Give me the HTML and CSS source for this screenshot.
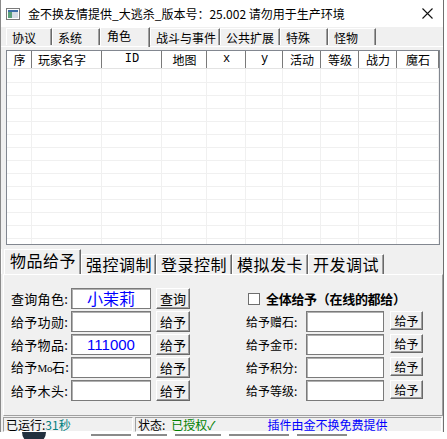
FILE: index.html
```html
<!DOCTYPE html>
<html lang="zh-CN">
<head>
    <meta charset="UTF-8">
    <title>金不换友情提供_大逃杀</title>
    <link rel="stylesheet" href="styles.css">
</head>
<body>
    <div class="screen">
        <div class="window">
            <div class="titlebar">
                <svg class="app-icon" width="14" height="12" viewBox="0 0 14 12">
                    <rect x="0.5" y="0.5" width="13" height="11" fill="#fff" stroke="#7a7a7a"/>
                    <rect x="2" y="2" width="10" height="2" fill="#3d6fa8"/>
                    <rect x="2" y="4" width="4" height="6" fill="#5aa07a"/>
                    <rect x="6" y="4" width="6" height="6" fill="#d6dde6"/>
                </svg>
                <span class="title">金不换友情提供_大逃杀_版本号：25.002 请勿用于生产环境</span>
                <svg class="close" width="11" height="11" viewBox="0 0 11 11">
                    <path d="M0.5 0.5 L10.5 10.5 M10.5 0.5 L0.5 10.5" stroke="#111" stroke-width="1.1"/>
                </svg>
            </div>

            <div class="tabs">
                <div class="tab w46">协议</div>
                <div class="tab w48">系统</div>
                <div class="tab w50 active">角色</div>
                <div class="tab w70">战斗与事件</div>
                <div class="tab w60">公共扩展</div>
                <div class="tab w48">特殊</div>
                <div class="tab w48">怪物</div>
            </div>

            <div class="page">
                <div class="listview">
                    <div class="list-head">
                        <div class="hcell c1">序</div>
                        <div class="hcell c2 left">玩家名字</div>
                        <div class="hcell c3 latin">ID</div>
                        <div class="hcell c4">地图</div>
                        <div class="hcell c5 latin">x</div>
                        <div class="hcell c6 latin">y</div>
                        <div class="hcell c7">活动</div>
                        <div class="hcell c8">等级</div>
                        <div class="hcell c9">战力</div>
                        <div class="hcell c10">魔石</div>
                    </div>
                    <div class="list-body">
                        <div class="col c1"></div>
                        <div class="col c2"></div>
                        <div class="col c3"></div>
                        <div class="col c4"></div>
                        <div class="col c5"></div>
                        <div class="col c6"></div>
                        <div class="col c7"></div>
                        <div class="col c8"></div>
                        <div class="col c9"></div>
                        <div class="col c10"></div>
                    </div>
                </div>
            </div>

            <div class="subtabs">
                <div class="subtab s77 active">物品给予</div>
                <div class="subtab s75">强控调制</div>
                <div class="subtab s76">登录控制</div>
                <div class="subtab s76">模拟发卡</div>
                <div class="subtab s76">开发调试</div>
            </div>

            <div class="form">
                <div class="form-col">
                    <div class="row">
                        <span class="label">查询角色:</span>
                        <div class="input big">小茉莉</div>
                        <button class="btn">查询</button>
                    </div>
                    <div class="row">
                        <span class="label">给予功勋:</span>
                        <div class="input"></div>
                        <button class="btn">给予</button>
                    </div>
                    <div class="row">
                        <span class="label">给予物品:</span>
                        <div class="input num">111000</div>
                        <button class="btn">给予</button>
                    </div>
                    <div class="row">
                        <span class="label">给予<span class="mo">Mo</span>石:</span>
                        <div class="input"></div>
                        <button class="btn">给予</button>
                    </div>
                    <div class="row">
                        <span class="label">给予木头:</span>
                        <div class="input"></div>
                        <button class="btn">给予</button>
                    </div>
                </div>
                <div class="form-col right">
                    <div class="row check-row">
                        <span class="checkbox"></span>
                        <span class="check-label">全体给予（在线的都给）</span>
                    </div>
                    <div class="row">
                        <span class="label small">给予赠石:</span>
                        <div class="input narrow"></div>
                        <button class="btn small">给予</button>
                    </div>
                    <div class="row">
                        <span class="label small">给予金币:</span>
                        <div class="input narrow"></div>
                        <button class="btn small">给予</button>
                    </div>
                    <div class="row">
                        <span class="label small">给予积分:</span>
                        <div class="input narrow"></div>
                        <button class="btn small">给予</button>
                    </div>
                    <div class="row">
                        <span class="label small">给予等级:</span>
                        <div class="input narrow"></div>
                        <button class="btn small">给予</button>
                    </div>
                </div>
            </div>

            <div class="statusbar">
                <div class="pane first">已运行:<span class="teal">31秒</span></div>
                <div class="pane second">
                    <span>状态:</span>
                    <span class="green">已授权✓</span>
                    <span class="blue">插件由金不换免费提供</span>
                </div>
            </div>
        </div>
        <div class="desk-right"></div>
        <div class="desk-bottom">
            <span class="avatar"></span>
            <span class="ink i1"></span>
            <span class="ink i2"></span>
            <span class="ink i3"></span>
            <span class="ink i4"></span>
            <span class="ink i5"></span>
        </div>
    </div>
</body>
</html>
```

FILE: styles.css
```css
body {
    margin: 0;
    width: 447px;
    height: 439px;
    overflow: hidden;
    background: #fff;
    font-family: "Noto Sans CJK SC", "Liberation Sans", sans-serif;
    color: #000;
}

.screen {
    display: grid;
    grid-template-columns: 444px 3px;
    grid-template-rows: 432px 7px;
}

.window {
    background: #f0f0f0;
    border-left: 1px solid #8a8a8a;
    border-right: 1px solid #6f6f6f;
    display: flex;
    flex-direction: column;
}

/* title bar */
.titlebar {
    height: 27px;
    flex: none;
    background: #fff;
    display: flex;
    align-items: center;
    padding-left: 5px;
}
.app-icon {
    flex: none;
    margin-top: 1px;
}
.title {
    margin-left: 8px;
    font-size: 12px;
    line-height: 16px;
    white-space: nowrap;
}
.close {
    margin-left: auto;
    margin-right: 10px;
}

/* top tabs */
.tabs {
    height: 20px;
    flex: none;
    display: flex;
    align-items: flex-end;
    padding-left: 5px;
    border-bottom: 1px solid #fff;
    box-sizing: border-box;
}
.tab {
    box-sizing: border-box;
    height: 17px;
    margin-bottom: 1px;
    padding: 0 0 0 5px;
    font-size: 12px;
    line-height: 17px;
    border-left: 1px solid #fff;
    border-top: 1px solid #fff;
    border-right: 1px solid #696969;
    box-shadow: inset -1px 0 0 #a0a0a0;
    white-space: nowrap;
}
.tab.active {
    height: 20px;
    margin-bottom: -1px;
    line-height: 15px;
    padding-left: 6px;
}
.w46 { width: 46px; }
.w48 { width: 48px; }
.w50 { width: 50px; }
.w60 { width: 60px; }
.w70 { width: 70px; }

/* list view */
.page {
    height: 200px;
    flex: none;
    padding: 3px 0 0 5px;
    box-sizing: border-box;
}
.listview {
    width: 434px;
    height: 195px;
    box-sizing: border-box;
    border: 1px solid #828790;
    background: #fff;
    display: flex;
    flex-direction: column;
}
.list-head {
    display: flex;
    height: 17px;
    flex: none;
    background: #fff;
    border-bottom: 1px solid #e3e3e3;
}
.hcell {
    box-sizing: border-box;
    font-size: 12px;
    line-height: 17px;
    text-align: center;
    border-right: 1px solid #7a7a7a;
    border-left: 1px solid #fff;
    white-space: nowrap;
}
.hcell.left {
    text-align: left;
    padding-left: 5px;
}
.hcell.latin {
    font-family: "Liberation Mono", monospace;
    font-size: 12px;
}
.list-body {
    flex: 1;
    display: flex;
    background: repeating-linear-gradient(to bottom, #fff 0, #fff 12px, #f0f0f0 12px, #f0f0f0 13px);
    background-position: 0 1px;
}
.col {
    box-sizing: border-box;
    border-right: 1px solid #f0f0f0;
}
.c1 { width: 25px; }
.c2 { width: 70px; }
.c3 { width: 60px; }
.c4 { width: 45px; }
.c5 { width: 39px; }
.c6 { width: 37px; }
.c7 { width: 38px; }
.c8 { width: 38px; }
.c9 { width: 38px; }
.c10 { width: 42px; }

/* lower tabs */
.subtabs {
    margin-top: 2px;
    height: 25px;
    flex: none;
    display: flex;
    align-items: flex-end;
    padding-left: 2px;
    border-left: 1px solid #fff;
    box-sizing: border-box;
}
.subtab {
    box-sizing: border-box;
    height: 20px;
    padding-left: 4px;
    font-size: 16px;
    line-height: 19px;
    border-left: 1px solid #fff;
    border-top: 1px solid #fff;
    border-right: 1px solid #696969;
    box-shadow: inset -1px 0 0 #a0a0a0;
    white-space: nowrap;
    letter-spacing: 0.5px;
}
.subtab.active {
    height: 25px;
    line-height: 20px;
    padding-left: 5px;
}
.s75 { width: 75px; }
.s76 { width: 76px; }
.s77 { width: 77px; }

/* form */
.form {
    height: 142px;
    flex: none;
    box-sizing: border-box;
    border-top: 1px solid #fff;
    border-left: 1px solid #fff;
    border-right: 1px solid #a0a0a0;
    border-bottom: 1px solid #a0a0a0;
    margin: 0 0 0 2px;
    padding: 13px 0 0 7px;
    display: grid;
    grid-template-columns: 235px 1fr;
}
.form-col {
    display: flex;
    flex-direction: column;
    gap: 2px;
}
.row {
    display: flex;
    align-items: center;
    height: 21px;
}
.label {
    width: 60px;
    font-size: 13px;
    line-height: 21px;
    white-space: nowrap;
    letter-spacing: 0.3px;
}
.label.small {
    font-size: 12px;
    letter-spacing: 0;
}
.mo {
    font-family: "Liberation Serif", serif;
    font-size: 11px;
    letter-spacing: -0.5px;
}
.input {
    width: 80px;
    height: 21px;
    box-sizing: border-box;
    background: #fff;
    border: 1px solid #7a7a7a;
    box-shadow: inset 1px 1px 0 #b0b0b0;
    color: #0000ff;
    text-align: center;
    font-size: 14px;
    line-height: 19px;
}
.input.big {
    font-size: 16px;
    line-height: 19px;
}
.input.num {
    font-family: "Liberation Sans", sans-serif;
    font-size: 15px;
}
.input.narrow {
    width: 78px;
}
.btn {
    margin-left: 5px;
    width: 34px;
    height: 21px;
    padding: 0;
    box-sizing: border-box;
    background: #f0f0f0;
    border: 1px solid;
    border-color: #fff #696969 #696969 #fff;
    box-shadow: inset -1px -1px 0 #a0a0a0;
    font-family: "Noto Sans CJK SC", sans-serif;
    font-size: 13px;
    line-height: 18px;
    color: #000;
}
.btn.small {
    margin-left: 6px;
    width: 33px;
    height: 19px;
    align-self: flex-start;
    font-size: 12px;
    line-height: 16px;
}
.check-row {
    padding-left: 2px;
}
.checkbox {
    width: 12px;
    height: 12px;
    box-sizing: border-box;
    background: #fff;
    border: 1px solid #6e6e6e;
}
.check-label {
    margin-left: 6px;
    font-size: 13px;
    font-weight: bold;
    white-space: nowrap;
    letter-spacing: -0.3px;
}

/* status bar */
.statusbar {
    height: 16px;
    flex: none;
    display: flex;
    padding: 1px 1px 0 2px;
    box-sizing: border-box;
    gap: 2px;
}
.pane {
    box-sizing: border-box;
    height: 15px;
    border-top: 1px solid #a0a0a0;
    border-left: 1px solid #a0a0a0;
    border-right: 1px solid #fff;
    border-bottom: 1px solid #fff;
    font-size: 12px;
    line-height: 13px;
    white-space: nowrap;
    padding-left: 2px;
}
.pane.first {
    width: 130px;
}
.pane.second {
    flex: 1;
    display: flex;
}
.teal {
    color: #008080;
}
.green {
    color: #008000;
    margin-left: 6px;
}
.blue {
    color: #0000ff;
    margin-left: 52px;
}

/* desktop behind the window */
.desk-right {
    background: #fff;
}
.desk-bottom {
    grid-column: 1 / 3;
    background: #fff;
    display: flex;
    align-items: flex-start;
    overflow: hidden;
}
.avatar {
    width: 24px;
    height: 24px;
    border-radius: 50%;
    background: #22303e;
    margin: -12px 0 0 22px;
    flex: none;
}
.ink {
    height: 2px;
    margin-top: 2px;
    background: #8a8a8a;
    flex: none;
}
.i1 { width: 40px; margin-left: 45px; }
.i2 { width: 30px; margin-left: 6px; }
.i3 { width: 46px; margin-left: 8px; }
.i4 { width: 60px; margin-left: 8px; }
.i5 { width: 50px; margin-left: 8px; }
```
